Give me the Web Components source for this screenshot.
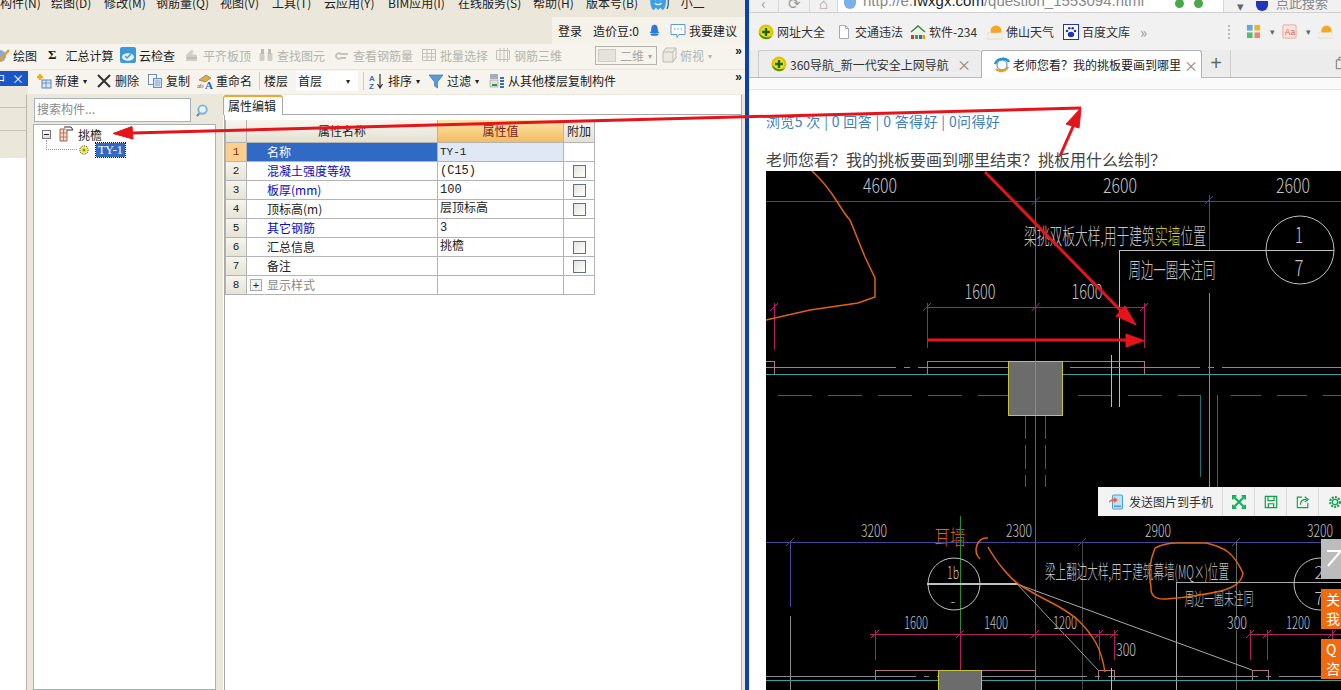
<!DOCTYPE html>
<html lang="zh">
<head>
<meta charset="utf-8">
<title>screen</title>
<style>
    html, body { margin: 0; padding: 0; }
    body {
        width: 1341px;
        height: 690px;
        overflow: hidden;
        position: relative;
        display: flex;
        font: 12px "Noto Sans CJK SC", "Liberation Sans", sans-serif;
        color: #222;
    }
</style>
</head>
<body>
<gcl-app></gcl-app>
<browser-window></browser-window>
<annot-arrows></annot-arrows>

<script>
const ICONS = {
    n360: `<circle cx="8" cy="8" r="7.500" fill="#e2c400"/><path d="M1 9a7.500 7.500 0 0 0 13 3.500C9 14 4 13 1 9z" fill="#2a9a1e"/><circle cx="8" cy="8" r="5" fill="#f6df20"/><path d="M8 4v8M4 8h8" stroke="#186a10" stroke-width="2.400"/>`,
    doc: `<path d="M3.500 1.500h6l3 3v10h-9z" fill="#fff" stroke="#aaa"/><path d="M9.500 1.500v3h3" fill="none" stroke="#aaa"/>`,
    house: `<path d="M1 8l7-6 7 6" fill="none" stroke="#3a8a3a" stroke-width="1.500"/><path d="M4 8h8v3H4z" fill="#e8f0e0"/><rect x="1" y="11" width="3" height="4" fill="#d33"/><rect x="5" y="11" width="3" height="4" fill="#3a3"/><rect x="9" y="11" width="3" height="4" fill="#36c"/><rect x="12.500" y="11" width="2.500" height="4" fill="#e90"/>`,
    sun: `<circle cx="9" cy="7" r="5.500" fill="#f5a623"/><path d="M0 15a4 4 0 0 1 5-6h6a4 4 0 0 1 5 6z" fill="#f2efe6" stroke="#d4d0c4" stroke-width=".6"/>`,
    paw: `<rect x=".5" y=".5" width="15" height="15" fill="#fff" stroke="#2233bb"/><ellipse cx="8" cy="10.500" rx="3.200" ry="2.800" fill="#2233bb"/><circle cx="4" cy="7" r="1.300" fill="#2233bb"/><circle cx="12" cy="7" r="1.300" fill="#2233bb"/><circle cx="6.300" cy="4.300" r="1.300" fill="#2233bb"/><circle cx="9.700" cy="4.300" r="1.300" fill="#2233bb"/>`,
    apps: `<rect x="1" y="1" width="6" height="6" fill="#59a9e8"/><rect x="9" y="1" width="6" height="6" fill="#f0b429"/><rect x="1" y="9" width="6" height="6" fill="#4fbf6b"/><rect x="9" y="9" width="6" height="6" fill="#e98a6a"/>`,
    aa: `<rect x="1" y="1" width="14" height="14" rx="1" fill="#fde4df" stroke="#e8a49a"/><text x="3" y="12" font-size="9" fill="#d8604e" font-family="Liberation Sans">Aa</text>`,
    ie: `<circle cx="8" cy="8" r="5" fill="none" stroke="#2b8fd8" stroke-width="1"/><path d="M1 7C3 1 12 0 15 5" fill="none" stroke="#2b8fd8" stroke-width="2.400"/><path d="M2 12c3 3 9 3 12-2" fill="none" stroke="#f09a1a" stroke-width="2.400"/>`,
    cloud: `<rect x="0" y="0" width="16" height="16" rx="2" fill="#3d9ad8"/><ellipse cx="8" cy="10" rx="6" ry="3.800" fill="#e8f4fc"/><path d="M5 9l2 2 4-4" fill="none" stroke="#3d9ad8" stroke-width="1.500"/>`,
    draw: `<circle cx="6" cy="9" r="6" fill="#8aa9d8"/><path d="M5 14L15 3" stroke="#e0a030" stroke-width="2.500"/>`,
    ghost: `<path d="M2 14V8l5-5 3 1-2 3 5 1v6z" fill="#cfcfc8"/><path d="M3 11h10" stroke="#aaa"/>`,
    bino: `<rect x="1.500" y="6" width="5" height="8" rx="1" fill="#cfcfc8"/><rect x="9.500" y="6" width="5" height="8" rx="1" fill="#cfcfc8"/><rect x="3" y="2" width="3" height="5" fill="#bdbdb6"/><rect x="10" y="2" width="3" height="5" fill="#bdbdb6"/>`,
    hook: `<path d="M2 9a3 3 0 0 1 5-2h7M2 9a3 3 0 0 0 5 2h5" fill="none" stroke="#c4c4bc" stroke-width="2"/>`,
    batch: `<path d="M1.500 2.500h13v11h-13zM1.500 6.500h13M1.500 10h13M6 2.500v11M10.500 2.500v11" fill="none" stroke="#c2c2ba"/>`,
    rebar: `<path d="M1.500 3.500h13v9h-13zM5 1v14M9 1v14M12.500 1v14" fill="none" stroke="#c2c2ba"/>`,
    cube: `<path d="M2 5h10v10H2zM2 5l3-4h10l-3 4M12 15l3-4V1" fill="#eceae0" stroke="#bdbdb5"/>`,
    add: `<rect x="6" y="7" width="9" height="8" fill="#dbe6f5" stroke="#5c86bd"/><path d="M6 10h9M10 7v8" stroke="#5c86bd" stroke-width=".8"/><path d="M4 1v6M1 4h6" stroke="#e2b020" stroke-width="2.600"/>`,
    x: `<path d="M2 2l12 12M14 2L2 14" stroke="#333" stroke-width="2"/>`,
    copy: `<rect x="1.500" y="1.500" width="8" height="10" fill="#f4f7fb" stroke="#6d8fb8"/><rect x="6.500" y="5.500" width="8" height="9" fill="#cfe0f4" stroke="#6d8fb8"/><path d="M8 8h5M8 10h5M8 12h5" stroke="#6d8fb8" stroke-width=".7"/>`,
    rename: `<path d="M2 7l7-5 5 3-6 4z" fill="#d8ae4e" stroke="#86662a" stroke-width=".6"/><text x="0" y="15" font-size="7" fill="#555" font-family="Liberation Serif">ab</text><text x="8" y="16" font-size="11" fill="#2c5fb0" font-family="Liberation Serif" font-weight="bold">A</text>`,
    sort: `<text x="0" y="8" font-size="8" fill="#3a6fb8" font-family="Liberation Sans" font-weight="bold">A</text><text x="0" y="16" font-size="8" fill="#3a6fb8" font-family="Liberation Sans" font-weight="bold">Z</text><path d="M11 1v13M8.500 11l2.500 4 2.500-4" fill="none" stroke="#333" stroke-width="1.200"/>`,
    funnel: `<path d="M1 2h14L9.500 9v6l-3-2V9z" fill="#5a9ad8" stroke="#2f6aa8" stroke-width=".6"/>`,
    floorcopy: `<rect x="1" y="1" width="8" height="5" fill="#aab"/><rect x="1" y="7" width="8" height="7" fill="#e0e0e0" stroke="#889" stroke-width=".5"/><path d="M3 12h5" stroke="#2a9a3a" stroke-width="2"/><path d="M11 5h4M11 8h4M11 11h4M11 14h4" stroke="#3a6fb8" stroke-width="2"/>`,
    search: `<circle cx="7" cy="7" r="4.500" fill="#e8f2fa" stroke="#7fb2d8" stroke-width="2"/><path d="M3.500 11L1 14" stroke="#4f8fc4" stroke-width="2.200"/>`,
    bell: `<path d="M8 1c3 0 4 2.500 4 5.500 0 2 1 3.500 2 4.500H2c1-1 2-2.500 2-4.500C4 3.500 5 1 8 1z" fill="#2c7ad8"/><ellipse cx="8" cy="13" rx="5" ry="1.600" fill="#2c7ad8"/>`,
    chat: `<path d="M1 1.500h14v10H9l-2 3v-3H1z" fill="#fff" stroke="#5c9ad8"/><path d="M4 6h1.500M7.300 6h1.500M10.500 6H12" stroke="#5c9ad8"/>`,
    hut: `<path d="M2 3h7v12H2z" fill="#f2d8c4" stroke="#a8624a"/><path d="M2 7h7M2 11h7M5.500 3v12" stroke="#a8624a" stroke-width=".7"/><path d="M6 1h7l2 3h-6" fill="#fff" stroke="#333"/>`,
    gear: `<circle cx="8" cy="8" r="6.500" fill="none" stroke="#7a7a20" stroke-width="2" stroke-dasharray="1.800 1.200"/><circle cx="8" cy="8" r="4.500" fill="#f0e020"/><circle cx="8" cy="8" r="2" fill="#8a8a20"/>`,
    mascot: `<path d="M2 8c0-5 3-8 7-8s7 3 7 8-2 8-3 8l-2-2-2 2-2-2-2 2c-1 0-3-3-3-8z" fill="#3ca0ea"/><circle cx="6.500" cy="6" r="1.300" fill="#fff"/><circle cx="11.500" cy="6" r="1.300" fill="#fff"/><path d="M6 10q3 2.500 6 0" stroke="#fff" fill="none"/>`,
    phone: `<rect x="4.500" y="1" width="10" height="14" rx="1" fill="#bfe0f6" stroke="#4ba0dc"/><rect x="6" y="11.500" width="7" height="1.500" fill="#4ba0dc"/><path d="M1 9c0-3 2-4 5-4V3l4 3-4 3V7C4 7 2 7.500 1 9z" fill="#f0663a"/>`,
    expand: `<path d="M2 2l12 12M14 2L2 14" stroke="#12b05a" stroke-width="2.400"/><path d="M1 5V1h4M11 1h4v4M15 11v4h-4M5 15H1v-4" fill="none" stroke="#12b05a" stroke-width="2"/>`,
    save: `<path d="M1.500 1.500h13v13h-13z" fill="none" stroke="#12a050" stroke-width="1.400"/><path d="M4.500 1.500v5h7v-5M5 14.500v-4.500h6v4.500" fill="none" stroke="#12a050" stroke-width="1.400"/>`,
    share: `<path d="M7 2.500H1.500v12h12V9" fill="none" stroke="#12a050" stroke-width="1.300"/><path d="M5 11c0-4 3-6 7-6M10 2l4 3-4 3" fill="none" stroke="#12a050" stroke-width="1.300"/>`,
    cog: `<circle cx="8" cy="8" r="5.500" fill="none" stroke="#12a050" stroke-width="2.600" stroke-dasharray="2.200 1.400"/><circle cx="8" cy="8" r="3" fill="none" stroke="#12a050" stroke-width="1.300"/>`,
    tabs: `<path d="M1.500 4.500h10v10h-10zM4.500 4.500v-3h10v10h-3" fill="none" stroke="#666"/>`
};

class AppIcon extends HTMLElement {
    connectedCallback() {
        const size = this.getAttribute('size') || 16;
        this.attachShadow({ mode: 'open' });
        this.shadowRoot.innerHTML = `
            <style>:host { display: inline-flex; flex: none; } svg { display: block; }</style>
            <svg width="${size}" height="${size}" viewBox="0 0 16 16">${ICONS[this.getAttribute('name')] || ''}</svg>`;
    }
}

// one toolbar entry, width is given so the bar keeps its rhythm
class ToolBtn extends HTMLElement {
    connectedCallback() {
        const icon = this.getAttribute('icon');
        const caret = this.hasAttribute('caret');
        this.attachShadow({ mode: 'open' });
        this.shadowRoot.innerHTML = `
            <style>
                :host {
                    display: flex;
                    flex: none;
                    align-items: center;
                    gap: 3px;
                    width: ${this.getAttribute('w')}px;
                    margin-left: ${this.getAttribute('ml') || 0}px;
                    white-space: nowrap;
                    font-size: 12px;
                    color: #1c1c1c;
                }
                :host([dis]) { color: #b4b4ac; }
                i { font-style: normal; font-size: 8px; margin-left: 1px; }
            </style>
            ${icon ? `<app-icon name="${icon}"></app-icon>` : ''}
            <slot></slot>
            ${caret ? '<i>▾</i>' : ''}`;
    }
}

class ToolBar extends HTMLElement {
    constructor() {
        super();
        this.attachShadow({ mode: 'open' });
        this.shadowRoot.innerHTML = `
            <style>
                :host {
                    display: flex;
                    align-items: center;
                    box-sizing: border-box;
                    padding-bottom: 3px;
                    position: relative;
                    background: #f6f4ec;
                    overflow: hidden;
                }
                .more {
                    margin-left: auto;
                    padding-right: 3px;
                    font: bold 12px "Liberation Sans", sans-serif;
                    position: relative;
                    top: -4px;
                }
            </style>
            <slot></slot>
            <span class="more">»</span>`;
    }
}

class MenuBar extends HTMLElement {
    constructor() {
        super();
        this.attachShadow({ mode: 'open' });
        const items = [['构件(N)', 51], ['绘图(D)', 53], ['修改(M)', 52], ['钢筋量(Q)', 64], ['视图(V)', 52], ['工具(T)', 52], ['云应用(Y)', 64], ['BIM应用(I)', 70], ['在线服务(S)', 75], ['帮助(H)', 53], ['版本号(B)', 62]];
        this.shadowRoot.innerHTML = `
            <style>
                :host { display: flex; height: 14px; overflow: hidden; font-size: 12px; color: #222; white-space: nowrap; }
                .row { display: flex; margin-top: -6px; height: 18px; line-height: 18px; }
                span { flex: none; }
                app-icon { margin: -2px 0 0 0; }
            </style>
            <div class="row">
                ${items.map(([t, w]) => `<span style="width:${w}px">${t}</span>`).join('')}
                <app-icon name="mascot" size="18"></app-icon>
                <span>广 小二</span>
            </div>`;
    }
}

class UserStrip extends HTMLElement {
    constructor() {
        super();
        this.attachShadow({ mode: 'open' });
        this.shadowRoot.innerHTML = `
            <style>
                :host { display: flex; height: 30px; justify-content: flex-end; }
                .box {
                    display: flex;
                    align-items: center;
                    width: 187px;
                    height: 27px;
                    margin-top: 3px;
                    padding-left: 6px;
                    background: #f4f2e9;
                    font-size: 12px;
                    white-space: nowrap;
                }
                .coin { margin: 0 9px 0 11px; }
                .chat { margin: 0 3px 0 9px; }
            </style>
            <div class="box">
                <span>登录</span><span class="coin">造价豆:0</span>
                <app-icon name="bell" size="13"></app-icon>
                <app-icon class="chat" name="chat" size="16"></app-icon>
                <span>我要建议</span>
            </div>`;
    }
}

class ViewCombo extends HTMLElement {
    connectedCallback() {
        const w = this.getAttribute('w');
        this.attachShadow({ mode: 'open' });
        this.shadowRoot.innerHTML = `
            <style>
                :host {
                    display: flex;
                    flex: none;
                    align-items: center;
                    box-sizing: border-box;
                    width: ${w}px;
                    height: 19px;
                    margin-left: ${this.getAttribute('ml') || 0}px;
                    font-size: 12px;
                }
                :host([flat]) { background: #fff; padding: 0 4px 0 2px; height: 20px; }
                :host([dis]) { border: 1px solid #b4b4ac; color: #a8a8a0; padding-left: 2px; }
                b { width: 16px; height: 11px; margin-right: 4px; background: #e6e4da; border: 1px solid #cfcdc4; }
                i { font-style: normal; font-size: 8px; margin-left: auto; padding-right: 4px; }
            </style>
            ${this.hasAttribute('dis') ? '<b></b>' : ''}
            <slot></slot><i>▾</i>`;
    }
}

class TreePanel extends HTMLElement {
    constructor() {
        super();
        this.attachShadow({ mode: 'open' });
        this.shadowRoot.innerHTML = `
            <style>
                :host { display: flex; flex-direction: column; width: 183px; flex: none; }
                .search { display: flex; align-items: center; height: 24px; padding-left: 1px; margin-bottom: 2px; margin-top: 3px; }
                .input {
                    box-sizing: border-box;
                    width: 157px;
                    height: 24px;
                    line-height: 20px;
                    padding-left: 2px;
                    border: 1px solid #a5b2c0;
                    background: #fff;
                    color: #8a8a8a;
                    font-size: 12px;
                }
                .search app-icon { margin-left: 5px; }
                .tree {
                    flex: 1;
                    box-sizing: border-box;
                    border: 1px solid #a8b0b8;
                    background: #fff;
                    padding: 2px 0 0 8px;
                    font-size: 12px;
                }
                .node { display: flex; align-items: center; height: 14px; }
                .minus {
                    box-sizing: border-box;
                    width: 9px;
                    height: 9px;
                    border: 1px solid #777;
                    background: linear-gradient(#fff, #ddd);
                    position: relative;
                    margin-right: 7px;
                }
                .minus::after { content: ""; position: absolute; left: 1px; right: 1px; top: 3px; height: 1px; background: #222; }
                .node span { margin-left: 4px; }
                .sub { padding-left: 37px; margin-top: 2px; position: relative; }
                .sub::before { content: ""; position: absolute; left: 4px; top: -3px; width: 30px; height: 9px; border-left: 1px dotted #999; border-bottom: 1px dotted #999; }
                .sub span {
                    margin-left: 7px;
                    padding: 0 2px;
                    line-height: 14px;
                    background: #316ac5;
                    color: #fff;
                    outline: 1px dotted #111;
                    font-family: "Liberation Serif", serif;
                }
            </style>
            <div class="search">
                <div class="input">搜索构件...</div>
                <app-icon name="search" size="15"></app-icon>
            </div>
            <div class="tree">
                <div class="node"><i class="minus"></i><app-icon name="hut" size="16"></app-icon><span>挑檐</span></div>
                <div class="node sub"><app-icon name="gear" size="10"></app-icon><span>TY-1</span></div>
            </div>`;
    }
}

class PropGrid extends HTMLElement {
    constructor() {
        super();
        this.attachShadow({ mode: 'open' });
        const rows = [
            ['名称', 'TY-1', 0, 'sel'],
            ['混凝土强度等级', '(C15)', 1, 'blue'],
            ['板厚(mm)', '100', 1, 'blue'],
            ['顶标高(m)', '层顶标高', 1, ''],
            ['其它钢筋', '3', 0, 'blue'],
            ['汇总信息', '挑檐', 1, ''],
            ['备注', '', 1, ''],
            ['显示样式', '', 0, 'more']
        ];
        const body = rows.map(([name, val, check, kind], i) => `
            <div class="c num ${i === 0 ? 'on' : ''}">${i + 1}</div>
            <div class="c name ${kind}">${kind === 'more' ? '<b>+</b>' : ''}${name}</div>
            <div class="c val ${i === 0 ? 'cur' : ''}">${val}</div>
            <div class="c chk">${check ? '<i></i>' : ''}</div>`).join('');
        this.shadowRoot.innerHTML = `
            <style>
                :host {
                    display: grid;
                    grid-template-columns: 21px 191px 126px 31px;
                    grid-template-rows: 23px repeat(8, 19px);
                    width: 369px;
                    box-sizing: content-box;
                    border-left: 1px solid #b4b4b4;
                    font-size: 12px;
                }
                .c { box-sizing: border-box; border-right: 1px solid #b4b4b4; border-bottom: 1px solid #b4b4b4; line-height: 18px; white-space: nowrap; }
                .h { background: linear-gradient(#f8f6ef, #e4e1d2); text-align: center; line-height: 22px; }
                .h.cur { background: linear-gradient(#fce4ac, #f4bc62); color: #7a1c1c; }
                .num { background: linear-gradient(#f6f4ec, #e6e3d6); text-align: center; font-family: "Liberation Mono", monospace; font-size: 11px; }
                .num.on { background: #fbd08e; color: #8a2a10; }
                .name { padding-left: 20px; }
                .name.sel { background: #316ac5; color: #fff; }
                .name.blue { color: #0a0ac0; }
                .name.more { color: #888; padding-left: 3px; display: flex; align-items: center; }
                .name b {
                    box-sizing: border-box;
                    width: 12px; height: 12px;
                    margin-right: 5px;
                    border: 1px solid #aaa;
                    background: #f2f2ee;
                    color: #222;
                    font: 11px/10px "Liberation Sans", sans-serif;
                    text-align: center;
                }
                .val { padding-left: 2px; font-family: "Liberation Mono", "Noto Sans CJK SC", monospace; font-size: 11px; }
                .val:not(.cur) { font-size: 12px; }
                .val.cur { background: #dfe8f4; }
                .chk { display: flex; align-items: center; justify-content: center; }
                .chk i { box-sizing: border-box; width: 13px; height: 13px; border: 1px solid #5f7388; background: linear-gradient(135deg, #e4e4de, #fff); }
            </style>
            <div class="c h"></div>
            <div class="c h">属性名称</div>
            <div class="c h cur">属性值</div>
            <div class="c h">附加</div>
            ${body}`;
    }
}

class GclApp extends HTMLElement {
    constructor() {
        super();
        this.attachShadow({ mode: 'open' });
        this.shadowRoot.innerHTML = `
            <style>
                :host {
                    display: flex;
                    flex-direction: column;
                    flex: none;
                    box-sizing: border-box;
                    width: 749px;
                    height: 690px;
                    background: #ebe8db;
                    border-right: 4px solid #0b3fb4;
                }
                tool-bar.one { height: 25px; margin-bottom: 1px; }
                .second { display: flex; height: 24px; }
                .title {
                    display: flex;
                    align-items: center;
                    justify-content: space-between;
                    flex: none;
                    box-sizing: border-box;
                    width: 28px;
                    height: 15px;
                    margin-top: 1px;
                    background: #1a55c8;
                    color: #fff;
                    font-size: 12px;
                    padding-right: 4px;
                    overflow: hidden;
                    white-space: nowrap;
                }
                .title span { margin-left: -7px; }
                .second tool-bar { flex: 1; padding-left: 8px; }
                .sep { flex: none; width: 1px; height: 18px; background: #d0cec2; }
                .body { flex: 1; display: flex; min-height: 0; padding-top: 1px; }
                .rail { flex: none; width: 27px; box-sizing: border-box; display: flex; flex-direction: column; margin-right: 6px; border-right: 1px solid #b8b6aa; }
                .rail div { flex: none; height: 23px; border-bottom: 1px solid #c8c6ba; box-sizing: border-box; }
                .rail div:first-child { height: 13px; }
                .rail .blank { flex: 1; height: auto; background: #fff; border: 0; margin-top: 27px; }
                .props { flex: 1; margin-left: 7px; display: flex; flex-direction: column; background: #fff; margin-right: 3px; border-right: 1px solid #aaa; }
                .tabs { height: 20px; flex: none; border-bottom: 1px solid #a8a8a8; box-sizing: border-box; background: #fff; }
                .tab {
                    display: block;
                    box-sizing: border-box;
                    width: 60px;
                    height: 20px;
                    margin-left: 0;
                    padding-left: 4px;
                    line-height: 18px;
                    border: 1px solid #a8a8a8;
                    border-top: 2px solid #f0a830;
                    border-bottom: 0;
                    background: #fff;
                    border-radius: 3px 3px 0 0;
                    font-size: 12px;
                }
                .sheet { flex: 1; margin-left: 1px; padding-top: 5px; border-left: 1px solid #a8a8a8; }
            </style>
            <menu-bar></menu-bar>
            <user-strip></user-strip>
            <tool-bar class="one">
                <tool-btn w="54" ml="-6" icon="draw">绘图</tool-btn>
                <tool-btn w="72" icon="">
                    <span style="font:bold 13px 'Liberation Serif',serif;margin-right:6px">Σ</span>汇总计算
                </tool-btn>
                <tool-btn w="64" icon="cloud">云检查</tool-btn>
                <tool-btn w="74" dis icon="ghost">平齐板顶</tool-btn>
                <tool-btn w="76" dis icon="bino">查找图元</tool-btn>
                <tool-btn w="87" dis icon="hook">查看钢筋量</tool-btn>
                <tool-btn w="74" dis icon="batch">批量选择</tool-btn>
                <tool-btn w="100" dis icon="rebar">钢筋三维</tool-btn>
                <view-combo w="62" dis>二维</view-combo>
                <tool-btn w="60" ml="4" dis icon="cube" caret>俯视</tool-btn>
            </tool-bar>
            <div class="second">
                <div class="title"><span>中</span><span>×</span></div>
                <tool-bar>
                    <tool-btn w="60" icon="add" caret>新建</tool-btn>
                    <tool-btn w="51" icon="x">删除</tool-btn>
                    <tool-btn w="50" icon="copy">复制</tool-btn>
                    <tool-btn w="62" icon="rename">重命名</tool-btn>
                    <span class="sep"></span>
                    <tool-btn w="32" ml="4">楼层</tool-btn>
                    <view-combo w="62" flat>首层</view-combo>
                    <span class="sep" style="margin:0 5px"></span>
                    <tool-btn w="59" icon="sort" caret>排序</tool-btn>
                    <tool-btn w="61" icon="funnel" caret>过滤</tool-btn>
                    <tool-btn w="200" icon="floorcopy">从其他楼层复制构件</tool-btn>
                </tool-bar>
            </div>
            <div class="body">
                <div class="rail"><div></div><div></div><div class="blank"></div></div>
                <tree-panel></tree-panel>
                <div class="props">
                    <div class="tabs"><span class="tab">属性编辑</span></div>
                    <div class="sheet"><prop-grid></prop-grid></div>
                </div>
            </div>`;
    }
}

class BrowserChrome extends HTMLElement {
    constructor() {
        super();
        this.attachShadow({ mode: 'open' });
        const marks = [
            ['n360', '网址大全', 78], ['doc', '交通违法', 74], ['house', '软件-234', 77],
            ['sun', '佛山天气', 76], ['paw', '百度文库', 77]
        ];
        this.shadowRoot.innerHTML = `
            <style>
                :host { display: block; flex: none; background: #f1f1f1; font-size: 12px; color: #333; white-space: nowrap; }
                .addr { display: flex; align-items: center; height: 13px; overflow: hidden; border-bottom: 1px solid #d0d0d0; box-sizing: border-box; }
                .nav { flex: none; width: 30px; height: 100%; color: #999; font-size: 15px; line-height: 6px; border-right: 1px solid #d8d8d8; box-sizing: border-box; text-align: center; }
                .bar { display: flex; flex: none; width: 386px; height: 100%; background: #fff; padding-left: 6px; box-sizing: border-box; border-right: 1px solid #d8d8d8; overflow: hidden; }
                .shield { flex: none; width: 12px; height: 10px; margin: -1px 7px 0 0; background: #7db0e8; border-radius: 0 0 6px 6px; }
                .url { margin-top: -9px; font: 15px/20px "Liberation Sans", sans-serif; color: #888; }
                .url b { font-weight: normal; color: #222; }
                .grn { flex: none; width: 9px; height: 9px; border-radius: 50%; background: #4aa84a; margin: -1px 0 0 0; }
                .find { flex: none; margin-left: 13px; color: #666; line-height: 4px; font-size: 13px; }
                .marks { display: flex; align-items: center; height: 37px; padding-left: 9px; box-sizing: border-box; }
                .mark { display: flex; align-items: center; gap: 3px; flex: none; }
                .tail { color: #999; font-size: 15px; width: 20px; flex: none; }
                .dots { flex: none; width: 2px; height: 14px; margin-left: 68px; border-left: 2px dotted #bbb; margin-right: 14px; }
                .right { display: flex; align-items: center; }
                .right i { font-style: normal; font-size: 9px; color: #666; margin: 0 7px 0 9px; }
                .tabs { display: flex; height: 28px; padding-left: 9px; box-sizing: border-box; border-bottom: 1px solid #bbb; background: #ececec; }
                .tab { display: flex; align-items: center; gap: 3px; flex: none; box-sizing: border-box; height: 28px; padding-left: 12px; border: 1px solid #ccc; border-bottom: 0; border-radius: 3px 3px 0 0; }
                .tab em { font-style: normal; color: #888; font-size: 14px; margin-left: auto; padding-right: 10px; }
                .t1 { width: 223px; background: #ededed; border-right: 0; height: 27px; }
                .t2 { width: 221px; background: #fff; color: #222; border-color: #b0b0b0; }
                .t2 em { padding-right: 7px; }
                .plus { flex: none; width: 28px; text-align: center; font: 20px/26px "Liberation Sans", sans-serif; color: #666; border-right: 1px solid #ccc; }
                .tabs app-icon.end { margin: 6px 0 0 104px; }
                .strip { height: 12px; background: #fafafa; border-bottom: 1px solid #e4e4e4; box-sizing: border-box; }
            </style>
            <div class="addr">
                <div class="nav">‹</div>
                <div class="nav" style="width:31px">⟳</div>
                <div class="nav" style="width:28px">⌂</div>
                <div class="bar">
                    <span class="shield"></span>
                    <span class="url">http://e.<b>fwxgx.com</b>/question_1553094.html</span>
                    <span style="flex:1"></span>
                    <span class="grn" style="margin-right:10px"></span>
                    <span class="grn" style="margin-right:20px"></span>
                </div>
                <span class="find">▾</span>
                <span class="shield" style="background:#2233bb;margin:-1px 2px 0 12px"></span>
                <span style="margin:-6px 0 0 6px;color:#888;font-size:13px;line-height:16px">点此搜索</span>
            </div>
            <div class="marks">
                ${marks.map(([icon, text, w]) => `<span class="mark" style="width:${w}px"><app-icon name="${icon}" size="16"></app-icon>${text}</span>`).join('')}
                <span class="tail">»</span>
                <span class="dots"></span>
                <div class="right">
                    <app-icon name="apps" size="15"></app-icon><i>▾</i>
                    <app-icon name="aa" size="15"></app-icon><i>▾</i>
                    <app-icon name="sun" size="15"></app-icon>
                </div>
            </div>
            <div class="tabs">
                <div class="tab t1"><app-icon name="n360" size="16"></app-icon><span>360导航_新一代安全上网导航</span><em>×</em></div>
                <div class="tab t2"><app-icon name="ie" size="16"></app-icon><span>老师您看？我的挑板要画到哪里</span><em>×</em></div>
                <span class="plus">+</span>
                <app-icon class="end" name="tabs" size="14"></app-icon>
            </div>
            <div class="strip"></div>`;
    }
}

class CadDrawing extends HTMLElement {
    constructor() {
        super();
        this.attachShadow({ mode: 'open' });
        const text = (t, cx, cy, w, h, fill = '#c4c4c4') =>
            `<text x="${cx - w / 2}" y="${cy + h * 0.42}" font-size="${h}" fill="${fill}" textLength="${w}" lengthAdjust="spacingAndGlyphs">${t}</text>`;
        const line = (x1, y1, x2, y2, c, extra = '') =>
            `<line class="${x1 === x2 || y1 === y2 ? 'crisp' : ''}" x1="${x1}" y1="${y1}" x2="${x2}" y2="${y2}" stroke="${c}" ${extra}/>`;
        const tick = (x, y, c) => line(x - 4, y + 4, x + 4, y - 4, c);
        const BLUE = '#45459c', MAG = '#b0205e', TEAL = '#38a0a0', DTEAL = '#1f7076', GRAY = '#8a8a8a', PINK = '#b07484', WHITE = '#c0c0c0';
        const ORANGE = '#e0620e';
        let s = '';
        // upper drawing
        s += line(1035.500, 171, 1035.500, 303, '#2a8a3a');
        s += line(1035.500, 303, 1035.500, 690, '#666');
        s += line(766, 201, 1341, 201, BLUE);
        s += tick(1035.500, 201, BLUE) + tick(1209, 200, BLUE);
        s += line(1209, 195, 1209, 250, BLUE);
        s += line(1209, 293, 1209, 487, GRAY);
        s += text('4600', 880, 185, 34, 20) + text('2600', 1120, 185, 34, 20) + text('2600', 1293, 185, 34, 20);
        s += `<text x="1024" y="244" font-size="22" fill="#c4c4c4" textLength="182" lengthAdjust="spacingAndGlyphs">梁挑双板大样,用于建筑<tspan fill="#c8c820">实墙</tspan>位置</text>`;
        s += line(1119, 250, 1334, 250, WHITE) + line(1119, 250, 1119, 407, WHITE);
        s += `<circle cx="1300" cy="250" r="34" fill="none" stroke="${WHITE}"/>`;
        s += text('1', 1299, 234, 8, 22) + text('7', 1299, 267, 9, 22);
        s += text('周边一圈未注同', 1172, 269, 87, 22);
        s += text('1600', 980, 291, 31, 20) + text('1600', 1087, 291, 31, 20);
        s += line(927, 307, 1144, 307, MAG);
        [774, 927, 1035.500, 1144].forEach(x => { s += tick(x, 307, '#c02070'); });
        s += line(774, 303, 774, 350, MAG) + line(927, 303, 927, 348, MAG) + line(1144, 303, 1144, 348, MAG) + line(1035.500, 303, 1035.500, 361, MAG);
        s += `<path d="M812 171Q826 184 836 200T850 220L865 257 875 278V297L858 303 810 310 766 320" fill="none" stroke="${ORANGE}" stroke-width="1.500"/>`;
        s += `<path class="crisp" d="M927 374V361H1144V374M766 361H774V374" fill="none" stroke="${PINK}"/>`;
        s += line(766, 367, 1341, 367, GRAY, 'stroke-dasharray="130 8 6 8"');
        s += line(766, 374, 1341, 374, TEAL);
        s += line(778, 395, 1200, 395, DTEAL, 'stroke-dasharray="34 16"');
        s += line(1217, 395, 1341, 395, DTEAL, 'stroke-dasharray="30 16" stroke-dashoffset="-14"');
        s += line(1200, 395, 1200, 477, DTEAL) + line(1217, 395, 1217, 487, DTEAL);
        s += line(1025, 415, 1025, 487, DTEAL, 'stroke-dasharray="24 6"') + line(1045, 415, 1045, 487, DTEAL, 'stroke-dasharray="24 6"');
        s += line(1111.500, 355, 1111.500, 407, '#bbb') + line(1119, 374, 1119, 407, '#bbb');
        s += `<rect x="1008.500" y="361.500" width="54" height="54" fill="#6c6c6c" stroke="#c4c43a"/>`;
        s += line(1035.500, 361, 1035.500, 415, '#8a8a8a');
        // lower drawing
        s += text('3200', 874, 530, 26, 17) + text('2300', 1019, 530, 26, 17) + text('2900', 1158, 530, 26, 17) + text('3200', 1320, 530, 26, 17);
        s += text('耳墙', 950, 537, 31, 20, ORANGE);
        s += line(766, 542, 1341, 542, BLUE);
        [790, 1082, 1236].forEach(x => { s += tick(x, 542, BLUE); });
        s += line(790, 542, 790, 607, BLUE) + line(790, 616, 790, 690, GRAY);
        s += line(1082, 542, 1082, 690, '#444');
        s += line(1236, 542, 1236, 620, '#666') + line(1236, 630, 1236, 690, '#666');
        s += line(960, 516, 960, 634, '#2a8a3a') + line(960, 634, 960, 670, MAG);
        s += `<circle cx="954" cy="584" r="26" fill="none" stroke="${WHITE}"/>`;
        s += line(927, 584, 1017, 584, WHITE, 'stroke-width="1.500"');
        s += text('1b', 953, 572, 12, 17) + text('-', 953, 600, 5, 14);
        s += line(1017, 584, 1098, 670, '#999') + line(1017, 584, 1252, 670, '#aaa');
        s += text('梁上翻边大样,用于建筑幕墙(MQ×)位置', 1137, 571, 184, 19);
        s += line(1176, 582, 1341, 582, '#aaa') + line(1176, 582, 1176, 690, '#aaa');
        s += text('周边一圈未注同', 1219, 598, 69, 17);
        s += `<circle cx="1320" cy="584" r="26" fill="none" stroke="${WHITE}"/>`;
        s += text('2', 1319, 572, 9, 17) + text('7', 1319, 598, 9, 17);
        s += text('1600', 916, 622, 24, 17) + text('1400', 996, 622, 24, 17) + text('1200', 1065, 622, 24, 17);
        s += text('300', 1237, 622, 20, 17) + text('1200', 1298, 622, 24, 17) + text('300', 1126, 649, 20, 17);
        s += line(870, 634, 1118, 634, MAG) + line(1249, 634, 1341, 634, MAG);
        [875, 960, 1035, 1099, 1114, 1250, 1267, 1332].forEach(x => {
            s += tick(x, 634, '#c02070') + line(x, 630, x, 660, MAG);
        });
        s += `<path class="crisp" d="M875 680V670H1035V680M1098 680V670H1114V680M1252 680V670H1268V680" fill="none" stroke="${PINK}"/>`;
        s += line(766, 676, 1341, 676, GRAY, 'stroke-dasharray="150 8 5 8"');
        s += line(766, 680, 1341, 680, TEAL);
        s += `<rect x="938.500" y="670.500" width="43" height="30" fill="#6c6c6c" stroke="#c4c43a"/>`;
        s += line(1111.500, 668, 1111.500, 690, '#bbb');
        s += `<path d="M988 538Q980 537 977 545T980 559" fill="none" stroke="${ORANGE}" stroke-width="1.500"/>`;
        s += `<path d="M988 547Q994 558 1004 570T1023 587Q1038 596 1052 603T1078 620Q1090 632 1096 643T1105 672" fill="none" stroke="${ORANGE}" stroke-width="1.500"/>`;
        s += `<path d="M1155 548Q1165 543 1177 543T1206 543Q1220 546 1228 552T1243 573Q1242 582 1232 587T1199 595Q1182 598 1166 599T1151 587Q1149 576 1150 567T1155 548" fill="none" stroke="${ORANGE}" stroke-width="1.500"/>`;
        this.shadowRoot.innerHTML = `
            <style>
                :host { display: block; width: 575px; height: 519px; background: #000; overflow: hidden; }
                svg { display: block; font-family: "Noto Sans CJK SC", "Liberation Sans", sans-serif; font-weight: 300; }
                .crisp { shape-rendering: crispEdges; }
            </style>
            <svg width="575" height="519" viewBox="766 171 575 519">${s}</svg>`;
    }
}

class ImgBar extends HTMLElement {
    constructor() {
        super();
        this.attachShadow({ mode: 'open' });
        this.shadowRoot.innerHTML = `
            <style>
                :host {
                    position: absolute;
                    left: 349px;
                    top: 397px;
                    width: 243px;
                    height: 29px;
                    display: flex;
                    align-items: center;
                    background: #f3f3f3;
                    font-size: 12px;
                    color: #333;
                    overflow: hidden;
                    white-space: nowrap;
                }
                .send { display: flex; align-items: center; gap: 5px; flex: none; width: 125px; height: 100%; padding-left: 10px; box-sizing: border-box; border-right: 1px solid #d8d8d8; }
                .btn { display: flex; align-items: center; justify-content: center; flex: none; width: 32px; height: 100%; box-sizing: border-box; border-right: 1px solid #d8d8d8; }
            </style>
            <div class="send"><app-icon name="phone" size="16"></app-icon>发送图片到手机</div>
            <div class="btn"><app-icon name="expand" size="14"></app-icon></div>
            <div class="btn"><app-icon name="save" size="14"></app-icon></div>
            <div class="btn"><app-icon name="share" size="14"></app-icon></div>
            <div class="btn" style="border:0"><app-icon name="cog" size="14"></app-icon></div>`;
    }
}

class SideDock extends HTMLElement {
    constructor() {
        super();
        this.attachShadow({ mode: 'open' });
        this.shadowRoot.innerHTML = `
            <style>
                :host {
                    position: absolute;
                    left: 572px;
                    top: 449px;
                    width: 20px;
                    display: flex;
                    flex-direction: column;
                    gap: 10px;
                    color: #fff;
                    font-size: 14px;
                    line-height: 19px;
                    overflow: hidden;
                }
                div { box-sizing: border-box; width: 20px; height: 40px; padding: 1px 0 0 5px; background: #f26a0c; white-space: pre; overflow: hidden; }
                .top { background: #bcbcbc; padding: 11px 0 0 5px; }
                svg { display: block; }
            </style>
            <div class="top"><svg width="15" height="22" viewBox="0 0 15 22"><path d="M1 1h14M14 2L2 16" stroke="#fff" stroke-width="2" fill="none"/></svg></div>
            <div>关
我</div>
            <div>Q
咨</div>`;
    }
}

class BrowserWindow extends HTMLElement {
    constructor() {
        super();
        this.attachShadow({ mode: 'open' });
        this.shadowRoot.innerHTML = `
            <style>
                :host { display: flex; flex-direction: column; flex: 1; min-width: 0; height: 690px; background: #fff; overflow: hidden; }
                .page { flex: 1; position: relative; padding: 21px 0 0 17px; background: #fff; font-size: 16px; line-height: 20px; white-space: nowrap; }
                .stats { color: #3f7fbd; font-size: 14px; letter-spacing: .35px; }
                .q { margin: 18px 0 2px; color: #444; }
            </style>
            <browser-chrome></browser-chrome>
            <div class="page">
                <div class="stats">浏览5 次 | 0 回答 | 0 答得好 | 0问得好</div>
                <div class="q">老师您看？我的挑板要画到哪里结束？挑板用什么绘制？</div>
                <cad-drawing></cad-drawing>
                <img-bar></img-bar>
                <side-dock></side-dock>
            </div>`;
    }
}

// the red marks someone drew over the whole screenshot
class AnnotArrows extends HTMLElement {
    constructor() {
        super();
        this.attachShadow({ mode: 'open' });
        this.shadowRoot.innerHTML = `
            <style>
                :host { position: absolute; inset: 0; pointer-events: none; }
                svg { display: block; }
            </style>
            <svg width="1341" height="690" viewBox="0 0 1341 690" fill="none" stroke="#e6141a" stroke-width="3">
                <path d="M1081 108L132 133"/>
                <path d="M113 133.500L132 126.500 133 139z" fill="#e6141a" stroke-width="1"/>
                <path d="M1060 156L1075 122"/>
                <path d="M1081 108L1066 124 1079 128z" fill="#e6141a" stroke-width="1"/>
                <path d="M985 172L1122 312"/>
                <path d="M1136 325L1116 316 1125 306z" fill="#e6141a" stroke-width="1"/>
                <path d="M928 340H1128"/>
                <path d="M1144 340.500L1126 334V347z" fill="#e6141a" stroke-width="1"/>
            </svg>`;
    }
}

[
    ['app-icon', AppIcon], ['tool-btn', ToolBtn], ['tool-bar', ToolBar], ['menu-bar', MenuBar],
    ['user-strip', UserStrip], ['view-combo', ViewCombo], ['tree-panel', TreePanel], ['prop-grid', PropGrid],
    ['gcl-app', GclApp], ['browser-chrome', BrowserChrome], ['cad-drawing', CadDrawing], ['img-bar', ImgBar],
    ['side-dock', SideDock], ['browser-window', BrowserWindow], ['annot-arrows', AnnotArrows]
].forEach(([name, cls]) => customElements.define(name, cls));
</script>
</body>
</html>
